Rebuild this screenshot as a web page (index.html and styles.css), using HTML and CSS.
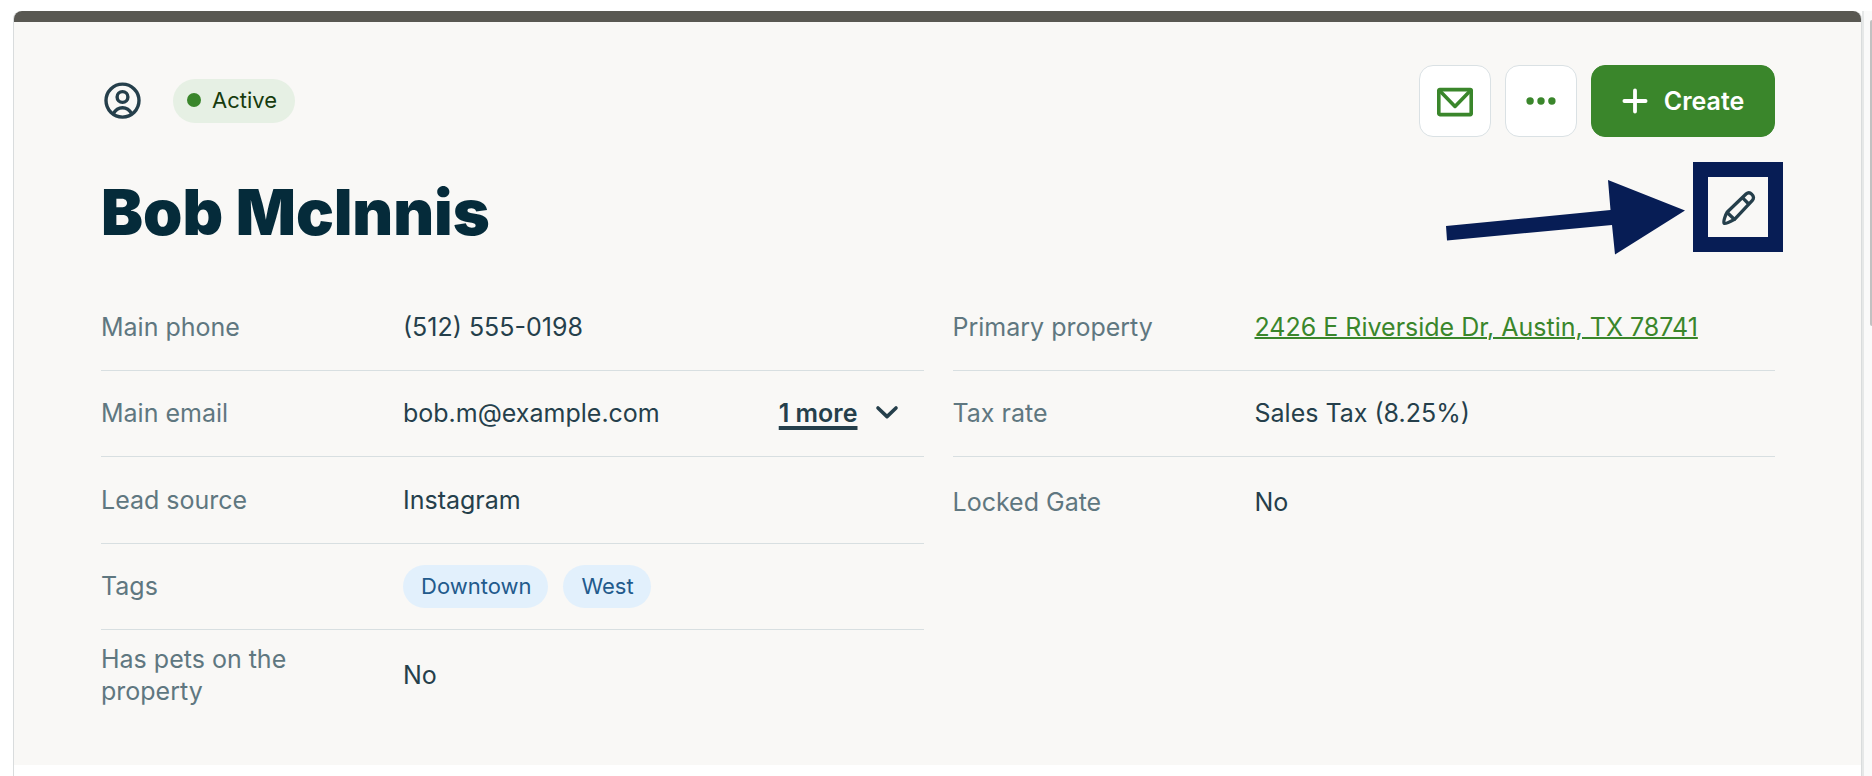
FILE: index.html
```html
<!DOCTYPE html>
<html lang="en">
<head>
<meta charset="utf-8">
<title>Bob McInnis</title>
<meta name="viewport" content="width=device-width, initial-scale=1">
<link rel="stylesheet" href="styles.css">
</head>
<body class="page">
<main class="card">
  <section class="client">
    <div class="toolbar">
      <div class="status">
        <svg class="icon-user" viewBox="0 0 40 40" fill="none" stroke="currentColor" stroke-width="3.4" aria-hidden="true">
          <circle cx="20.500" cy="19.600" r="16.5"/>
          <circle cx="20.500" cy="16" r="5.400"/>
          <path d="M11.100 33c2.200-3.900 5.700-6.300 9.400-6.300s7.200 2.400 9.400 6.300"/>
        </svg>
        <span class="badge"><span class="dot"></span>Active</span>
      </div>
      <div class="actions">
        <button class="btn" type="button" aria-label="Email">
          <svg class="icon-mail" viewBox="0 0 40 32" fill="none" stroke="currentColor" stroke-width="3.6" stroke-linejoin="round" aria-hidden="true">
            <rect x="3.8" y="4.600" width="32.4" height="25" rx="1"/>
            <path d="M5 6l15 15.4L35 6"/>
          </svg>
        </button>
        <button class="btn" type="button" aria-label="More actions">
          <svg class="icon-dots" viewBox="0 0 32 8" fill="currentColor" aria-hidden="true">
            <circle cx="5.1" cy="4" r="3.7"/><circle cx="16" cy="4" r="3.7"/><circle cx="26.9" cy="4" r="3.7"/>
          </svg>
        </button>
        <button class="btn btn-create" type="button">
          <svg class="icon-plus" viewBox="0 0 26 26" fill="none" stroke="currentColor" stroke-width="3.8" stroke-linecap="round" aria-hidden="true">
            <path d="M13 2.4v21.2M2.4 13h21.2"/>
          </svg>
          Create
        </button>
      </div>
    </div>

    <div class="heading">
      <h1 class="name">Bob McInnis</h1>
      <button class="edit" type="button" aria-label="Edit">
        <svg class="icon-pencil" viewBox="0 0 36 36" fill="none" stroke="currentColor" stroke-width="3.300" stroke-linejoin="round" aria-hidden="true">
          <path d="M4.200 34.300C3 33.100 5.200 26.200 7.300 23L26.300 4.800C28.200 3.100 30.400 3.800 31.900 5.400 33.600 7 34.100 9.500 32.400 11.300L14.800 30.200C12 31.700 6 35.100 4.200 34.300z"/>
          <path d="M22.400 8.700l6.800 6.800M7.700 24L14 30"/>
        </svg>
      </button>
      <svg class="arrow" viewBox="0 0 240 75" fill="currentColor" aria-hidden="true">
        <path d="M0 46L164.500 30 162 0 239 30.500 169 74.500 166 45 1 60.500z"/>
      </svg>
    </div>

    <div class="columns">
      <dl class="fields">
        <div class="field"><dt class="label">Main phone</dt><dd class="value">(512) 555-0198</dd></div>
        <div class="field">
          <dt class="label">Main email</dt>
          <dd class="value">bob.m@example.com
            <button class="more" type="button"><span class="more-text">1 more</span>
              <svg class="icon-chevron" viewBox="0 0 24 16" fill="none" stroke="currentColor" stroke-width="3.6" stroke-linecap="round" stroke-linejoin="round" aria-hidden="true"><path d="M3 3l9 8.600 9-8.600"/></svg>
            </button>
          </dd>
        </div>
        <div class="field"><dt class="label">Lead source</dt><dd class="value">Instagram</dd></div>
        <div class="field"><dt class="label">Tags</dt><dd class="value tags"><span class="tag">Downtown</span><span class="tag">West</span></dd></div>
        <div class="field"><dt class="label">Has pets on the property</dt><dd class="value">No</dd></div>
      </dl>
      <dl class="fields">
        <div class="field"><dt class="label">Primary property</dt><dd class="value"><a class="link" href="#">2426 E Riverside Dr, Austin, TX 78741</a></dd></div>
        <div class="field"><dt class="label">Tax rate</dt><dd class="value">Sales Tax (8.25%)</dd></div>
        <div class="field"><dt class="label">Locked Gate</dt><dd class="value">No</dd></div>
      </dl>
    </div>
  </section>
</main>
<div class="rail"><div class="thumb"></div></div>
</body>
</html>
```
FILE: styles.css
```css
* { box-sizing: border-box; }

.page {
  display: flex;
  min-height: 100vh;
  margin: 0;
  padding: 11px 0 0 13px;
  background: #fff;
  color: #253f4b;
  font-family: Inter, "Liberation Sans", sans-serif;
  font-size: 25px;
  line-height: 32px;
}

.card {
  flex: 1;
  min-width: 0;
  border: solid #d9dcdd;
  border-width: 0 1px;
  border-radius: 8px 8px 0 0;
}

.client {
  padding: 43px 86px 45px 87px;
  border-top: 11px solid #595852;
  border-radius: 8px 8px 0 0;
  background: #f9f8f6;
}

.rail {
  width: 10px;
  padding: 9px 0 0 6px;
  border-left: 2px solid #e6e8e8;
  background: #fafafa;
}

.thumb {
  height: 306px;
  border-radius: 2px 0 0 2px;
  background: #c1c1c1;
}

.toolbar,
.status,
.actions,
.field,
.value,
.more,
.badge {
  display: flex;
  align-items: center;
}

.toolbar { justify-content: space-between; }
.status { gap: 31px; }

.icon-user { width: 40px; height: 40px; margin-left: 1px; }

.badge {
  gap: 11px;
  height: 44px;
  padding: 0 18px 2px 14px;
  border-radius: 22px;
  background: #e6f0e4;
  color: #163b0d;
  font-size: 22px;
}

.dot {
  width: 14px;
  height: 14px;
  border-radius: 50%;
  background: #3a862b;
}

.actions { gap: 14px; }

.btn {
  display: flex;
  align-items: center;
  justify-content: center;
  width: 72px;
  height: 72px;
  padding: 0;
  border: 1px solid #dae1e4;
  border-radius: 14px;
  background: #fff;
  color: #3a862b;
  font: inherit;
}

.btn-create {
  gap: 16px;
  width: 184px;
  border-color: #3a862b;
  background: #3a862b;
  color: #fff;
  font-weight: 600;
}

.icon-mail { width: 40px; height: 32px; }
.icon-dots { width: 32px; height: 8px; }
.icon-plus { width: 26px; height: 26px; }

.heading {
  position: relative;
  display: flex;
  align-items: flex-start;
  justify-content: space-between;
  margin-top: 40px;
  padding-right: 7px;
}

.name {
  margin: 0;
  padding-top: 7px;
  color: #052b3a;
  font-size: 63px;
  font-weight: 900;
  line-height: 56px;
}

.edit {
  display: flex;
  align-items: center;
  justify-content: center;
  width: 60px;
  height: 60px;
  padding: 0;
  border: 0;
  background: none;
  color: #253f4b;
  outline: 15px solid #071d55;
}

.icon-pencil { width: 36px; height: 36px; }

.arrow {
  position: absolute;
  top: 3px;
  right: 89px;
  width: 240px;
  height: 75px;
  color: #071d55;
}

.columns {
  display: grid;
  grid-template-columns: 1fr 1fr;
  align-items: start;
  gap: 29px;
  margin-top: 44px;
}

.fields { margin: 0; }

.field {
  min-height: 86px;
  padding: 10px 0 11px;
  border-bottom: 1px solid #d8dfe1;
}

.field:nth-child(odd) { min-height: 87px; }

.field:last-child {
  min-height: 90px;
  border-bottom: 0;
}

.label {
  flex: none;
  width: 302px;
  padding-right: 80px;
  color: #5f7780;
}

.value {
  flex: 1;
  min-width: 0;
  margin: 0;
}

.tags { gap: 15px; }

.tag {
  padding: 5px 17px 6px 18px;
  border-radius: 22px;
  background: #e2f0fc;
  color: #225a8c;
  font-size: 22px;
}

.more {
  gap: 17px;
  margin-left: auto;
  padding: 0 25px 0 0;
  border: 0;
  background: none;
  color: inherit;
  font: inherit;
  font-weight: 600;
}

.more-text {
  text-decoration: underline;
  text-decoration-thickness: 4px;
  text-underline-offset: 4px;
}

.icon-chevron { width: 24px; height: 16px; }

.link {
  color: #3a862b;
  text-decoration-thickness: 2px;
}
```
